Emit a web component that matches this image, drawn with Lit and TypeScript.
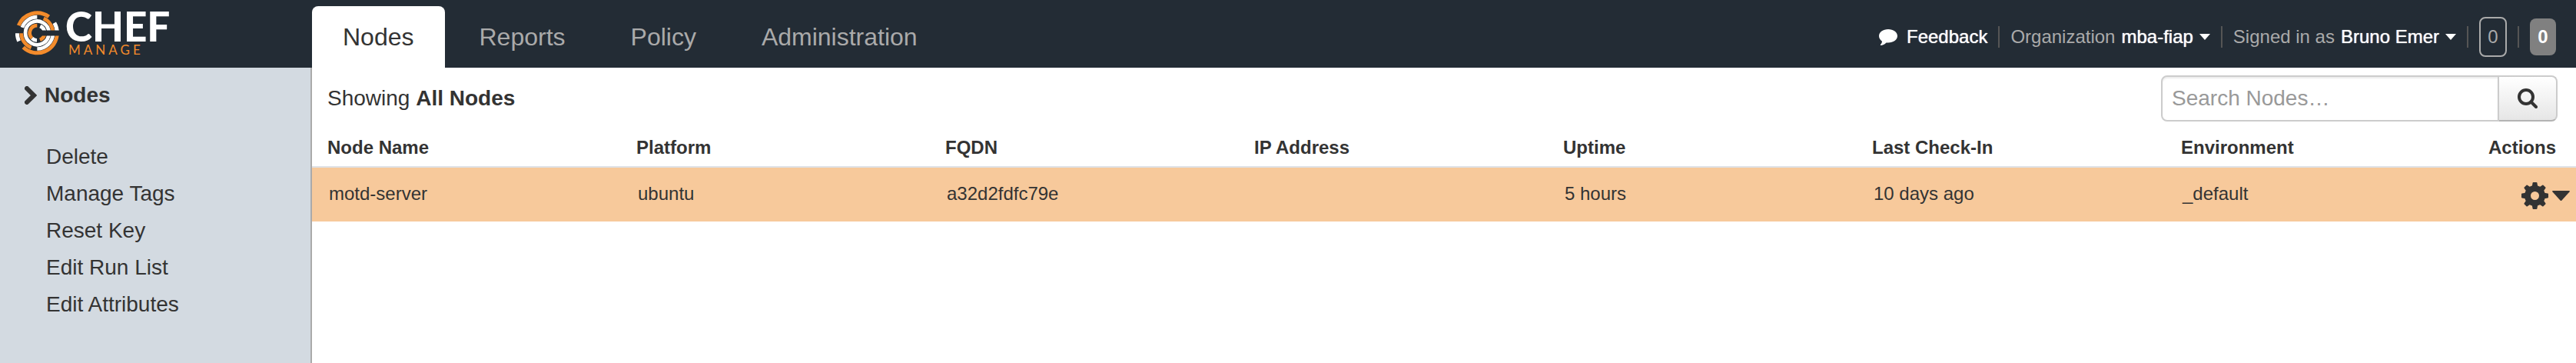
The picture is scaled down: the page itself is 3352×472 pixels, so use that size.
import { LitElement, html, svg, css } from "lit";
import { customElement } from "lit/decorators.js";

interface NodeRow {
  name: string;
  platform: string;
  fqdn: string;
  ip: string;
  uptime: string;
  checkIn: string;
  environment: string;
}

const TABS = ["Nodes", "Reports", "Policy", "Administration"];
const ACTIONS = ["Delete", "Manage Tags", "Reset Key", "Edit Run List", "Edit Attributes"];
const COLUMNS = ["Node Name", "Platform", "FQDN", "IP Address", "Uptime", "Last Check-In", "Environment"];
const NODES: NodeRow[] = [
  {
    name: "motd-server",
    platform: "ubuntu",
    fqdn: "a32d2fdfc79e",
    ip: "",
    uptime: "5 hours",
    checkIn: "10 days ago",
    environment: "_default",
  },
];

/** Ring segment centred on the mark, angles in degrees, counter-clockwise from the right. */
const arc = (r: number, width: number, from: number, to: number, color: string) => {
  const point = (a: number) => {
    const t = (a * Math.PI) / 180;
    return `${(145 + r * Math.cos(t)).toFixed(1)} ${(127 - r * Math.sin(t)).toFixed(1)}`;
  };
  const large = to - from > 180 ? 1 : 0;
  return svg`<path d="M${point(from)}A${r} ${r} 0 ${large} 0 ${point(to)}" fill="none" stroke=${color} stroke-width=${width}></path>`;
};

const ORANGE = "#f38b2b";
const WHITE = "#ffffff";

const mark = html`<svg class="mark" viewBox="60 41 171 173" aria-hidden="true">
  ${arc(78, 15, 54, 158, ORANGE)}
  ${arc(78, 15, 1, 30, WHITE)}
  ${arc(78, 15, 181, 204, WHITE)}
  ${arc(78, 15, 226, 359, ORANGE)}
  ${arc(62, 14, 90, 160, WHITE)}
  ${arc(62, 14, 1, 66, ORANGE)}
  ${arc(62, 14, 181, 248, ORANGE)}
  ${arc(62, 14, 270, 359, WHITE)}
  ${arc(46, 14, 1, 359, WHITE)}
  ${arc(29, 14, 90, 225, ORANGE)}
  ${arc(29, 14, 1, 66, WHITE)}
  ${arc(29, 14, 226, 268, WHITE)}
  ${arc(29, 14, 292, 359, ORANGE)}
  <rect x="150" y="117" width="82" height="21" fill="#232c35"></rect>
</svg>`;

const caret = html`<svg class="caret" viewBox="0 0 14 8" aria-hidden="true"><path d="M0 0H14L7 8Z" fill="currentColor"></path></svg>`;

const teeth = [0, 45, 90, 135, 180, 225, 270, 315].map(
  (a) => svg`<path d="M13.500 7 14.600 .8Q14.700 0 15.500 0H19.500Q20.300 0 20.400 .8L21.500 7Z" transform=${`rotate(${a} 17.5 17.5)`}></path>`
);

@customElement("app-root")
export class AppRoot extends LitElement {
  static styles = css`
    :host {
      display: flex;
      flex-direction: column;
      min-height: 100vh;
      background: #fff;
      color: #333;
      font-family: "Liberation Sans", Arial, sans-serif;
      font-size: 24px;
      line-height: 28px;
    }
    * {
      box-sizing: border-box;
    }
    a {
      color: inherit;
      text-decoration: none;
    }
    button,
    input {
      font: inherit;
      color: inherit;
      margin: 0;
      padding: 0;
      border: 0;
      background: none;
    }
    svg {
      display: block;
      flex: none;
    }
    .topbar {
      display: flex;
      height: 88px;
      background: #232c35;
      color: #aaa;
    }
    .brand {
      display: flex;
      width: 406px;
      padding: 14px 20px;
      gap: 8px;
      flex: none;
    }
    .mark {
      width: 57px;
      height: 58px;
    }
    .wordmark {
      display: flex;
      flex-direction: column;
      font-family: Lato, sans-serif;
    }
    .chef {
      color: #fff;
      font-size: 53px;
      font-weight: 900;
      line-height: 40px;
    }
    .manage {
      padding-left: 4px;
      color: #f38b2b;
      font-size: 17px;
      letter-spacing: 4px;
      line-height: 22px;
    }
    .tabs {
      display: flex;
      flex: 1;
      gap: 5px;
      padding-top: 8px;
      font-size: 32px;
      line-height: 80px;
    }
    .tab {
      padding: 0 40px;
      border-radius: 8px 8px 0 0;
    }
    .tab.active {
      background: #fff;
      color: #333;
    }
    .account {
      display: flex;
      align-items: center;
      gap: 14px;
      padding: 8px 26px 0 0;
    }
    .item {
      display: flex;
      align-items: center;
      gap: 8px;
    }
    .strong {
      color: #fff;
      text-shadow: 0 0 1px #fff;
    }
    .bubble {
      width: 24px;
      height: 21px;
      margin-right: 4px;
    }
    .caret {
      width: 14px;
      height: 8px;
    }
    .rule {
      width: 2px;
      height: 28px;
      background: #555;
    }
    .count {
      width: 36px;
      height: 52px;
      border: 2px solid #aaa;
      border-radius: 8px;
      text-align: center;
    }
    .count.filled {
      width: 34px;
      height: 48px;
      border: 0;
      background: #808080;
      color: #fff;
      font-weight: bold;
    }
    .body {
      display: flex;
      flex: 1;
    }
    .sidebar {
      flex: none;
      width: 406px;
      padding: 20px 32px;
      background: #d3dae1;
      border-right: 2px solid #aaa;
      font-size: 28px;
      line-height: 32px;
    }
    .heading {
      display: flex;
      align-items: center;
      gap: 10px;
      margin: 0 0 40px;
      font-size: 28px;
    }
    .chevron {
      width: 16px;
      height: 24px;
    }
    .actions {
      margin: 0;
      padding: 0 28px;
      list-style: none;
      line-height: 48px;
    }
    .main {
      flex: 1;
      min-width: 0;
    }
    .toolbar {
      display: flex;
      justify-content: space-between;
      padding: 10px 24px 10px 20px;
      font-size: 28px;
      line-height: 60px;
    }
    .search {
      display: flex;
      width: 516px;
      height: 60px;
    }
    .field {
      flex: 1;
      min-width: 0;
      padding: 0 12px;
      border: 2px solid #ccc;
      border-radius: 8px 0 0 8px;
      box-shadow: inset 0 2px 2px rgba(0, 0, 0, 0.075);
    }
    .field::placeholder {
      color: #999;
      opacity: 1;
    }
    .go {
      display: grid;
      place-items: center;
      width: 76px;
      border: solid #ccc;
      border-width: 2px 2px 2px 0;
      border-bottom-color: #b3b3b3;
      border-radius: 0 8px 8px 0;
      background: linear-gradient(#fff, #e6e6e6);
    }
    .glass {
      width: 26px;
      height: 26px;
    }
    .table {
      width: 100%;
      border-collapse: separate;
      border-spacing: 0;
      table-layout: fixed;
    }
    .table th {
      height: 50px;
      padding: 0 0 0 20px;
      border-bottom: 2px solid #dfe1e6;
      text-align: left;
    }
    .table th.last {
      width: 132px;
      padding-right: 26px;
      padding-left: 0;
      text-align: right;
    }
    .table td {
      height: 70px;
      padding: 0 0 2px 22px;
      background: #f7c99b;
    }
    .table td.last {
      padding: 2px 8px 0 0;
    }
    .menu {
      display: flex;
      align-items: center;
      gap: 5px;
      margin-left: auto;
    }
    .gear {
      width: 35px;
      height: 35px;
    }
    .drop {
      width: 23px;
      height: 13px;
    }
  `;

  render() {
    return html`
      <header class="topbar">
        <a class="brand" href="#" aria-label="Chef Manage">
          ${mark}
          <span class="wordmark"><span class="chef">CHEF</span><span class="manage">MANAGE</span></span>
        </a>
        <nav class="tabs">
          ${TABS.map((t, i) => html`<a class="tab ${i === 0 ? "active" : ""}" href="#">${t}</a>`)}
        </nav>
        <div class="account">
          <a class="item strong" href="#">
            <svg class="bubble" viewBox="0 0 24 21" aria-hidden="true">
              <path fill="currentColor" d="M12 0C18.6 0 24 3.9 24 8.8S18.6 17.6 12 17.6Q10.700 17.600 9.500 17.400C7.500 19.500 4.800 20.700 2.200 21Q1.500 20.700 2 20Q3.900 18.400 4 15.700C1.500 14 0 11.600 0 8.800C0 3.900 5.400 0 12 0Z"></path>
            </svg>
            Feedback
          </a>
          <span class="rule"></span>
          <button class="item">Organization <span class="strong">mba-fiap</span><span class="strong">${caret}</span></button>
          <span class="rule"></span>
          <button class="item">Signed in as <span class="strong">Bruno Emer</span><span class="strong">${caret}</span></button>
          <span class="rule"></span>
          <button class="count">0</button>
          <span class="rule"></span>
          <button class="count filled">0</button>
        </div>
      </header>
      <div class="body">
        <aside class="sidebar">
          <h2 class="heading">
            <svg class="chevron" viewBox="0 0 16 24" aria-hidden="true">
              <path d="M3 3 12 12 3 21" fill="none" stroke="currentColor" stroke-width="6" stroke-linecap="round"></path>
            </svg>
            Nodes
          </h2>
          <ul class="actions">
            ${ACTIONS.map((a) => html`<li><a href="#">${a}</a></li>`)}
          </ul>
        </aside>
        <main class="main">
          <div class="toolbar">
            <div>Showing <b>All Nodes</b></div>
            <form class="search" role="search">
              <input class="field" type="text" aria-label="Search Nodes" placeholder="Search Nodes…" />
              <button class="go" type="button" aria-label="Search">
                <svg class="glass" viewBox="0 0 26 26" aria-hidden="true">
                  <g fill="none" stroke="currentColor" stroke-width="4">
                    <circle cx="11" cy="11" r="9"></circle>
                    <path d="M17.500 17.500 24 24" stroke-linecap="round"></path>
                  </g>
                </svg>
              </button>
            </form>
          </div>
          <table class="table">
            <thead>
              <tr>
                ${COLUMNS.map((c) => html`<th scope="col">${c}</th>`)}
                <th class="last" scope="col">Actions</th>
              </tr>
            </thead>
            <tbody>
              ${NODES.map(
                (n) => html`<tr>
                  <td>${n.name}</td>
                  <td>${n.platform}</td>
                  <td>${n.fqdn}</td>
                  <td>${n.ip}</td>
                  <td>${n.uptime}</td>
                  <td>${n.checkIn}</td>
                  <td>${n.environment}</td>
                  <td class="last">
                    <button class="menu" aria-label="Actions for ${n.name}">
                      <svg class="gear" viewBox="0 0 35 35" aria-hidden="true">
                        <g fill="currentColor">${teeth}</g>
                        <circle cx="17.500" cy="17.500" r="9.500" fill="none" stroke="currentColor" stroke-width="8"></circle>
                      </svg>
                      <svg class="drop" viewBox="0 0 23 13" aria-hidden="true">
                        <path fill="currentColor" d="M1 0H22Q23.500 .5 22.500 1.600L12.500 12.400Q11.500 13.400 10.500 12.400L.5 1.600Q-.5 .5 1 0Z"></path>
                      </svg>
                    </button>
                  </td>
                </tr>`
              )}
            </tbody>
          </table>
        </main>
      </div>
    `;
  }
}
